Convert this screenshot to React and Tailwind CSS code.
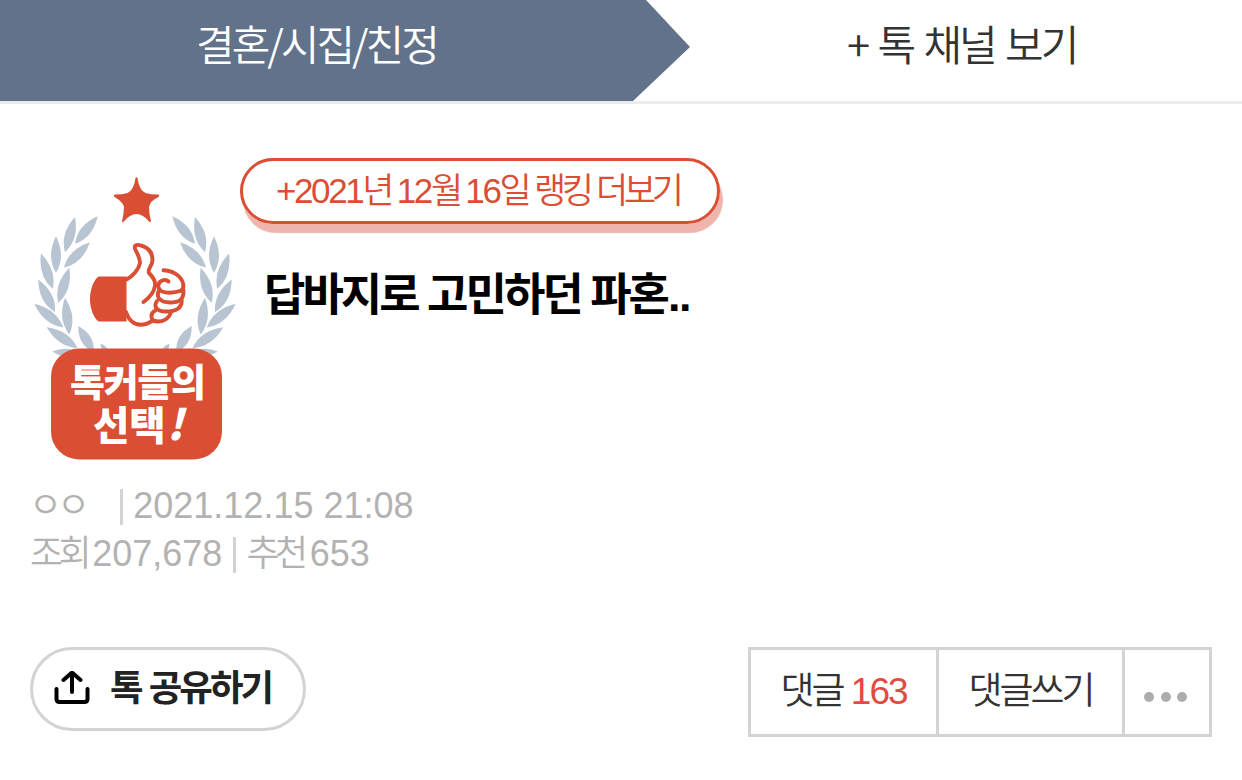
// Leaves of the left branch: [tipX, tipY, baseX, baseY, width]
const LEAVES = [
  [97.7, 216.2, 75, 243.8, 10],
  [75, 217, 65, 252.2, 10],
  [90, 242.2, 64, 267.6, 10],
  [56, 236.2, 56, 272.8, 10],
  [41, 253.5, 52.7, 289, 10],
  [69.3, 267.8, 58.3, 302.8, 10],
  [38.3, 279.5, 55, 312.2, 10],
  [65, 297.8, 69.3, 334.5, 10],
  [34.3, 303.8, 63.3, 327.6, 10],
  [46.7, 327.3, 77.5, 348, 10],
  [78.3, 326, 93.5, 352, 10],
  [52.3, 351.5, 80, 354, 8],
  [100.5, 343.5, 108, 354, 5],
]

function leafPath([x1, y1, x2, y2, w]) {
  const len = Math.hypot(x2 - x1, y2 - y1)
  const nx = (-(y2 - y1) / len) * w
  const ny = ((x2 - x1) / len) * w
  const mx = x1 + (x2 - x1) * 0.55
  const my = y1 + (y2 - y1) * 0.55
  return `M${x1} ${y1}Q${mx + nx} ${my + ny} ${x2} ${y2}Q${mx - nx} ${my - ny} ${x1} ${y1}Z`
}

function Branch() {
  return LEAVES.map((l) => <path key={l.join()} d={leafPath(l)} />)
}

function ChoiceBadge() {
  return (
    <svg viewBox="30 170 210 295" className="h-[295px] w-[210px] shrink-0">
      <g fill="#b8c4d1">
        <Branch />
        <g transform="translate(270 0) scale(-1 1)">
          <Branch />
        </g>
      </g>
      <g fill="#da4e34">
        <path d="M135.5 178Q136.5 176.5 137.5 178Q139 190 145.5 193Q151 194.5 158 194.5Q160 195 158.5 197Q150 201 149 207Q149 214 151 221Q150 223 149 221.5Q143 214 136.5 214Q130 214 123.8 221.5Q122.5 223.5 122 221Q124 213 124 207Q123 202 114.5 197Q113 194.5 115 194.5Q122 194.5 127.5 193Q134 190 135.5 178Z" />
        <path d="M99.5 276.5H126.5V321.5H99.5C96 321.5 90 311 90 299S96 276.5 99.5 276.5Z" />
        <rect x="51" y="348.5" width="171" height="111" rx="28" />
      </g>
      {/* Thumb, palm, then the four fingers from top to bottom */}
      <g fill="none" stroke="#da4e34" strokeWidth="3.9" strokeLinecap="round" strokeLinejoin="round">
        <path d="M126.5 279.5C133 276 139 269 140 263C140 257 136 252 135 248.5C134 244.5 138 244.5 141 245.5C150 248 152.5 254 152.5 260C152.5 266 147 269 149 273C153 277 156 281 155 286C154 292 149 298 143.5 302" />
        <path d="M126 312C129 321 135 324.8 141 324.8C146 324.8 149 323 153 320.5" />
        <path d="M163.5 270.3C176 271 184 279 183.3 287Q183 290 180 291" />
        <path d="M168.5 281.5C165 278 158.5 281 158.3 286C158.5 293 169 294.5 182 290.5" />
        <path d="M158.5 291.5C156 298 161 302.5 170 302.5C179 302.5 184 300 183.5 290" />
        <path d="M157 301C153 307 157 311.5 166 311.5C176 311.5 182 308 181.7 300.5" />
        <path d="M155.5 310.5C150 313 150.5 319.5 154.5 321C162 323 169 319 171 312" />
      </g>
      <text
        fill="#fff"
        className="font-['Noto_Sans_CJK_KR',sans-serif] text-[38px] font-black tracking-[-1.3px]"
      >
        <tspan x="70" y="396">톡커들의</tspan>
        <tspan x="93" y="439.5" className="text-[39.5px] tracking-[0px]">선택</tspan>
        <tspan dx="1" className="text-[42px] italic">!</tspan>
      </text>
    </svg>
  )
}

function ShareIcon() {
  return (
    <svg
      viewBox="0 0 36 36"
      className="h-9 w-9"
      fill="none"
      stroke="#000"
      strokeWidth="4"
      strokeLinecap="round"
      strokeLinejoin="round"
    >
      <path d="M2.5 18V28Q2.5 31 5.5 31H30.5Q33.5 31 33.5 28V18M18 21V2M9.5 9L18 1.5L26.5 9" />
    </svg>
  )
}

function Header() {
  return (
    <header className="flex h-[104px] border-b-[3px] border-[#ebebeb] font-['Noto_Sans_CJK_KR',sans-serif] text-[42px] leading-[86px] font-[350] tracking-[-3px]">
      <div className="flex h-[101px] w-[690px] bg-[#61728a] text-white [clip-path:polygon(0_0,646px_0,690px_47px,633px_101px,0_101px)]">
        <span className="ml-[196px] whitespace-pre">결혼/시집/친정</span>
      </div>
      <a className="ml-[157px] whitespace-pre text-[#333] [word-spacing:4px]">+ 톡 채널 보기</a>
    </header>
  )
}

export default function App() {
  return (
    <div className="h-[780px] w-[1242px] overflow-hidden bg-white font-['Liberation_Sans','Noto_Sans_CJK_KR',sans-serif]">
      <Header />

      <section className="flex pt-[54px] pl-[30px]">
        <div className="pt-3">
          <ChoiceBadge />
        </div>
        <div className="flex flex-col items-start">
          <a className="flex h-[66px] w-[480px] rounded-full border-[3px] border-[#da4e34] pl-[33px] text-[35px] leading-[60px] font-[350] tracking-[-4.4px] whitespace-pre text-[#da4e34] shadow-[3px_9px_1px_#efb4ac] [word-spacing:1.3px]">
            <span className="tracking-[-2.4px]">+2021</span>년{' '}
            <span className="tracking-[-2.4px]">12</span>월{' '}
            <span className="tracking-[-2.4px]">16</span>일 랭킹 더보기
          </a>
          <h1 className="mt-[41px] ml-6 text-[45px] leading-[62px] font-bold tracking-[-3px] whitespace-pre text-black">
            답바지로 고민하던 파혼<span className="ml-px tracking-[-1.5px]">..</span>
          </h1>
        </div>
      </section>

      {/* Author, date and counters */}
      <section className="mt-[17px] ml-[30px] text-[36px] leading-[48px] font-[350] text-[#b2b2b2]">
        <div className="flex items-center whitespace-pre">
          <span className="-ml-px tracking-[-5px]">ㅇㅇ</span>
          <i className="mt-[2px] mr-[10px] ml-[35px] h-9 w-[3px] bg-[#d3d3d3]" />
          <span>2021.12.15 21:08</span>
        </div>
        <div className="flex items-center whitespace-pre">
          <span className="tracking-[-4.5px]">조회</span>
          <span className="ml-[5px]">207,678</span>
          <i className="mt-[2px] mr-[10px] ml-[11px] h-9 w-[3px] bg-[#d3d3d3]" />
          <span className="tracking-[-4.5px]">추천</span>
          <span className="ml-[6px]">653</span>
        </div>
      </section>

      <section className="mt-[69px] flex items-start justify-between px-[30px]">
        <button className="flex h-[84px] w-[276px] items-center rounded-full border-[3px] border-[#d3d3d3] pl-[21px] text-[36.5px] font-bold tracking-[-3px] whitespace-pre text-[#222]">
          <ShareIcon />
          <span className="ml-5 [word-spacing:1px]">톡 공유하기</span>
        </button>
        <div className="flex h-[90px] w-[464px] divide-x-[3px] divide-[#d3d3d3] border-[3px] border-[#d3d3d3] text-[37px] leading-[80px] font-[350] tracking-[-3px] whitespace-pre text-[#333]">
          <button className="w-[188px] [word-spacing:1px]">
            댓글 <span className="tracking-[-2px] text-[#e04b42]">163</span>
          </button>
          <button className="w-[186px]">댓글쓰기</button>
          <button className="flex flex-1 items-center justify-center gap-[6.5px] pt-[9px] pr-[3px]">
            <i className="h-[10px] w-[10px] rounded-full bg-[#adadad]" />
            <i className="h-[10px] w-[10px] rounded-full bg-[#adadad]" />
            <i className="h-[10px] w-[10px] rounded-full bg-[#adadad]" />
          </button>
        </div>
      </section>
    </div>
  )
}
